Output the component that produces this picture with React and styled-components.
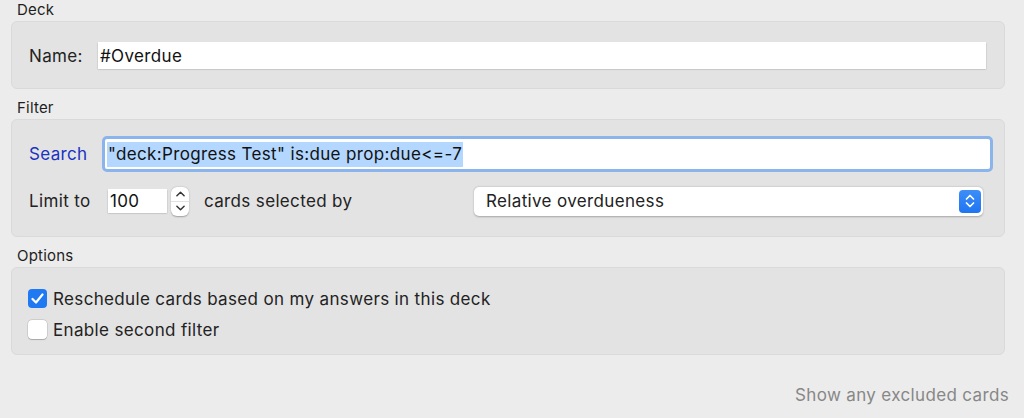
import React from "react";
import styled, { createGlobalStyle } from "styled-components";

const Global = createGlobalStyle`
  html, body { margin: 0; padding: 0; background: #ececec; }
  body {
    font-family: Inter, "Noto Sans", "Liberation Sans", sans-serif;
    color: #222;
    letter-spacing: 0.35px;
  }
`;

const Page = styled.div`
  width: 1024px;
  height: 418px;
  box-sizing: border-box;
  padding: 0 19px 0 11px;
  display: flex;
  flex-direction: column;
  overflow: hidden;
`;

const SectionLabel = styled.div`
  font-size: 15px;
  line-height: 20px;
  padding-left: 6px;
  margin-top: ${(p) => p.$top || 0}px;
  margin-bottom: 1px;
  color: #1e1e1e;
  letter-spacing: 0.2px;
`;

const GroupBox = styled.div`
  background: #e3e3e3;
  border: 1px solid #dadada;
  border-radius: 6px;
  box-sizing: border-box;
  height: ${(p) => p.$h}px;
  padding: ${(p) => p.$pad};
  display: flex;
  flex-direction: column;
  gap: ${(p) => p.$gap || 0}px;
`;

const Row = styled.div`
  display: flex;
  align-items: center;
  height: ${(p) => p.$h || 30}px;
`;

const FieldLabel = styled.span`
  font-size: 17px;
  color: ${(p) => (p.$link ? "#1a33c2" : "#222")};
  width: ${(p) => p.$w}px;
  flex: none;
`;

const TextField = styled.div`
  flex: 1;
  height: 27px;
  background: #fff;
  box-shadow: 0 0.5px 1.5px rgba(0, 0, 0, 0.3);
  display: flex;
  align-items: center;
  padding-left: 2px;
  font-size: 17px;
  color: #111;
`;

const FocusRing = styled.div`
  flex: 1;
  height: 36px;
  box-sizing: border-box;
  border: 3px solid #8cb4ec;
  border-radius: 5px;
  display: flex;
  align-items: center;
  background: #fff;
  padding-left: 2px;
`;

const Selected = styled.span`
  background: #b3d7ff;
  font-size: 17px;
  line-height: 25px;
  padding: 0 1px;
  color: #111;
`;

const NumberField = styled.div`
  width: 59px;
  height: 24px;
  background: #fff;
  box-shadow: 0 0.5px 1.5px rgba(0, 0, 0, 0.3);
  font-size: 17px;
  display: flex;
  align-items: center;
  padding-left: 2px;
  box-sizing: border-box;
  color: #111;
`;

const Stepper = styled.div`
  width: 18px;
  height: 29px;
  margin-left: 4px;
  background: #fff;
  border-radius: 6px;
  box-shadow: 0 0.5px 1.5px rgba(0, 0, 0, 0.3);
  display: flex;
  flex-direction: column;
  align-items: center;
  justify-content: space-around;
  position: relative;
  &::after {
    content: "";
    position: absolute;
    left: 0;
    right: 0;
    top: 14px;
    height: 1px;
    background: #e2e2e2;
  }
`;

const Trailing = styled.span`
  font-size: 17px;
  color: #222;
  margin-left: 15px;
  width: 270px;
  flex: none;
`;

const Select = styled.div`
  flex: 1;
  margin-right: 10px;
  height: 29px;
  background: #fff;
  border-radius: 5px;
  box-shadow: 0 0.5px 2px rgba(0, 0, 0, 0.28);
  display: flex;
  align-items: center;
  justify-content: space-between;
  padding: 0 2px 0 12px;
  font-size: 17px;
  color: #222;
`;

const SelectButton = styled.div`
  width: 22px;
  height: 23px;
  background: linear-gradient(#3d8ef8, #1f74f2);
  border-radius: 4px;
  display: flex;
  align-items: center;
  justify-content: center;
`;

const CheckRow = styled.label`
  display: flex;
  align-items: center;
  height: 31px;
  font-size: 17px;
  color: #222;
  gap: 6px;
`;

const Box = styled.span`
  width: 19px;
  height: 19px;
  box-sizing: border-box;
  border-radius: 4px;
  background: ${(p) => (p.$on ? "#1f79f3" : "#fff")};
  box-shadow: ${(p) => (p.$on ? "none" : "0 0 0 0.5px rgba(0,0,0,0.15), 0 0.5px 1px rgba(0,0,0,0.2)")};
  display: flex;
  align-items: center;
  justify-content: center;
`;

const Footer = styled.div`
  display: flex;
  justify-content: flex-end;
  margin-right: -4px;
  margin-top: 30px;
  font-size: 17px;
  color: #878787;
`;

const Chevron = ({ up, color = "#333", w = 10, h = 6 }) => (
  <svg width={w} height={h} viewBox="0 0 10 6">
    <path
      d={up ? "M1 5 L5 1 L9 5" : "M1 1 L5 5 L9 1"}
      fill="none"
      stroke={color}
      strokeWidth="1.6"
      strokeLinecap="round"
      strokeLinejoin="round"
    />
  </svg>
);

const Check = () => (
  <svg width="13" height="11" viewBox="0 0 13 11">
    <path d="M1.5 6 L5 9.5 L11.5 1.5" fill="none" stroke="#fff" strokeWidth="2.2" strokeLinecap="round" strokeLinejoin="round" />
  </svg>
);

export default function App() {
  return (
    <>
      <Global />
      <Page>
        <SectionLabel>Deck</SectionLabel>
        <GroupBox $h={68} $pad="20px 18px 0 17px">
          <Row $h={27}>
            <FieldLabel $w={69}>Name:</FieldLabel>
            <TextField>#Overdue</TextField>
          </Row>
        </GroupBox>

        <SectionLabel $top={9}>Filter</SectionLabel>
        <GroupBox $h={118} $pad="16px 11px 0 17px" $gap={14}>
          <Row $h={36}>
            <FieldLabel $link $w={73}>Search</FieldLabel>
            <FocusRing>
              <Selected>"deck:Progress Test" is:due prop:due&lt;=-7</Selected>
            </FocusRing>
          </Row>
          <Row $h={30}>
            <FieldLabel $w={79}>Limit to</FieldLabel>
            <NumberField>100</NumberField>
            <Stepper>
              <Chevron up w={9} h={6} />
              <Chevron w={9} h={6} />
            </Stepper>
            <Trailing>cards selected by</Trailing>
            <Select>
              <span>Relative overdueness</span>
              <SelectButton>
                <svg width="10" height="16" viewBox="0 0 10 16">
                  <path d="M1.5 6 L5 2.5 L8.5 6 M1.5 10 L5 13.5 L8.5 10" fill="none" stroke="#fff" strokeWidth="1.7" strokeLinecap="round" strokeLinejoin="round" />
                </svg>
              </SelectButton>
            </Select>
          </Row>
        </GroupBox>

        <SectionLabel $top={9}>Options</SectionLabel>
        <GroupBox $h={88} $pad="15px 17px 0 16px">
          <CheckRow>
            <Box $on>
              <Check />
            </Box>
            Reschedule cards based on my answers in this deck
          </CheckRow>
          <CheckRow>
            <Box />
            Enable second filter
          </CheckRow>
        </GroupBox>

        <Footer>Show any excluded cards</Footer>
      </Page>
    </>
  );
}
